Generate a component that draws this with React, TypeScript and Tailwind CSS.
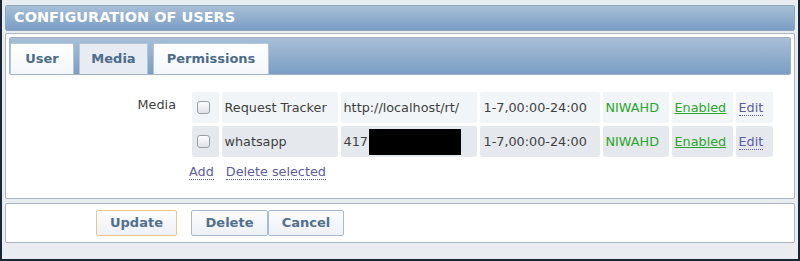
import React from "react";

const tabs = [
  { label: "User", active: false, w: "w-[64px]" },
  { label: "Media", active: true, w: "w-[69px]" },
  { label: "Permissions", active: false, w: "w-[116px]" },
];

const media = [
  { name: "Request Tracker", to: "http://localhost/rt/", hidden: false, bg: "bg-[#f1f5f8]" },
  { name: "whatsapp", to: "417", hidden: true, bg: "bg-[#e5e9ee]" },
];

function Checkbox() {
  return (
    <span className="block h-[13px] w-[13px] rounded-[3px] border border-[#9a9fa6] bg-gradient-to-b from-[#fdfdfd] to-[#dfe2e6]" />
  );
}

function Button({ label, primary, className }: { label: string; primary?: boolean; className?: string }) {
  return (
    <button
      className={`h-[26px] rounded-[2px] border bg-gradient-to-b from-[#fbfcfd] to-[#edf1f5] text-[13px] font-bold text-[#51708f] ${
        primary ? "border-[#efc586]" : "border-[#a9bccf]"
      } ${className ?? ""}`}
    >
      {label}
    </button>
  );
}

export default function App() {
  return (
    <div
      className="h-[261px] w-[800px] overflow-hidden border-b-2 border-l-2 border-r-2 border-[#1b2634] bg-[#e9edf1] pt-[5px] pl-[3px] pr-[3px]"
      style={{ fontFamily: '"DejaVu Sans", Verdana, sans-serif' }}
    >
      {/* Title bar */}
      <div className="flex h-[26px] items-center rounded-[2px] border border-[#8ea7c1] bg-gradient-to-b from-[#a8bfd7] to-[#7a9ec4] pl-[8px]">
        <span className="text-[14.5px] font-bold text-white">CONFIGURATION OF USERS</span>
      </div>

      {/* Tab panel */}
      <div className="mt-[2px] h-[166px] rounded-[2px] border border-[#aab6c2] bg-white p-[3px]">
        <div className="flex h-[38px] items-end gap-[5px] rounded-[2px] border border-[#9fb2c6] bg-gradient-to-b from-[#a8bfd7] to-[#7a9ec4]">
          {tabs.map((t) => (
            <div
              key={t.label}
              className={`flex h-[31px] ${t.w} items-center justify-center rounded-t-[2px] border border-b-0 border-[#b4c6d8] text-[13px] font-bold text-[#4d6b8a] ${
                t.active ? "bg-[#e6ecf2]" : "bg-gradient-to-b from-white to-[#f3f6f9]"
              }`}
            >
              {t.label}
            </div>
          ))}
        </div>

        <div className="flex pt-[14px] text-[12.8px] text-[#3f3f3f]">
          <div className="w-[180px] shrink-0 pt-[6px] pr-[13px] text-right">Media</div>
          <div>
            <table className="-ml-[0.5px] border-separate border-spacing-[3px]">
              <tbody>
                {media.map((m) => (
                  <tr key={m.name} className="h-[31px]">
                    <td className={`${m.bg} w-[27px] min-w-[27px] rounded-[2px] pl-[5px]`}>
                      <Checkbox />
                    </td>
                    <td className={`${m.bg} w-[116px] rounded-[2px] px-[3px]`}>{m.name}</td>
                    <td className={`${m.bg} w-[136px] rounded-[2px] px-[3px]`}>
                      {m.hidden ? (
                        <span className="flex items-center">
                          {m.to}
                          <span className="ml-[1px] block h-[26px] w-[92px] bg-black" />
                        </span>
                      ) : (
                        m.to
                      )}
                    </td>
                    <td className={`${m.bg} w-[120px] rounded-[2px] px-[4px]`}>1-7,00:00-24:00</td>
                    <td className={`${m.bg} w-[66px] rounded-[2px] px-[3px] text-[#2aa52a]`}>NIWAHD</td>
                    <td className={`${m.bg} w-[61px] rounded-[2px] px-[3px]`}>
                      <span className="text-[#2ba52b] underline">Enabled</span>
                    </td>
                    <td className={`${m.bg} w-[37px] rounded-[2px] px-[3px]`}>
                      <span className="border-b border-dotted border-[#5c5c9c] text-[#5c5c9c]">Edit</span>
                    </td>
                  </tr>
                ))}
              </tbody>
            </table>
            <div className="mt-[4px] flex gap-[12px] text-[#5c5c9c]">
              <span className="border-b border-dotted border-[#5c5c9c] leading-[15px]">Add</span>
              <span className="border-b border-dotted border-[#5c5c9c] leading-[15px]">Delete selected</span>
            </div>
          </div>
        </div>
      </div>

      {/* Buttons */}
      <div className="mt-[4px] flex h-[40px] items-center rounded-[2px] border border-[#aab6c2] bg-white pl-[90px]">
        <Button label="Update" primary className="w-[81px]" />
        <Button label="Delete" className="ml-[14px] w-[77px]" />
        <Button label="Cancel" className="w-[76px]" />
      </div>
    </div>
  );
}
